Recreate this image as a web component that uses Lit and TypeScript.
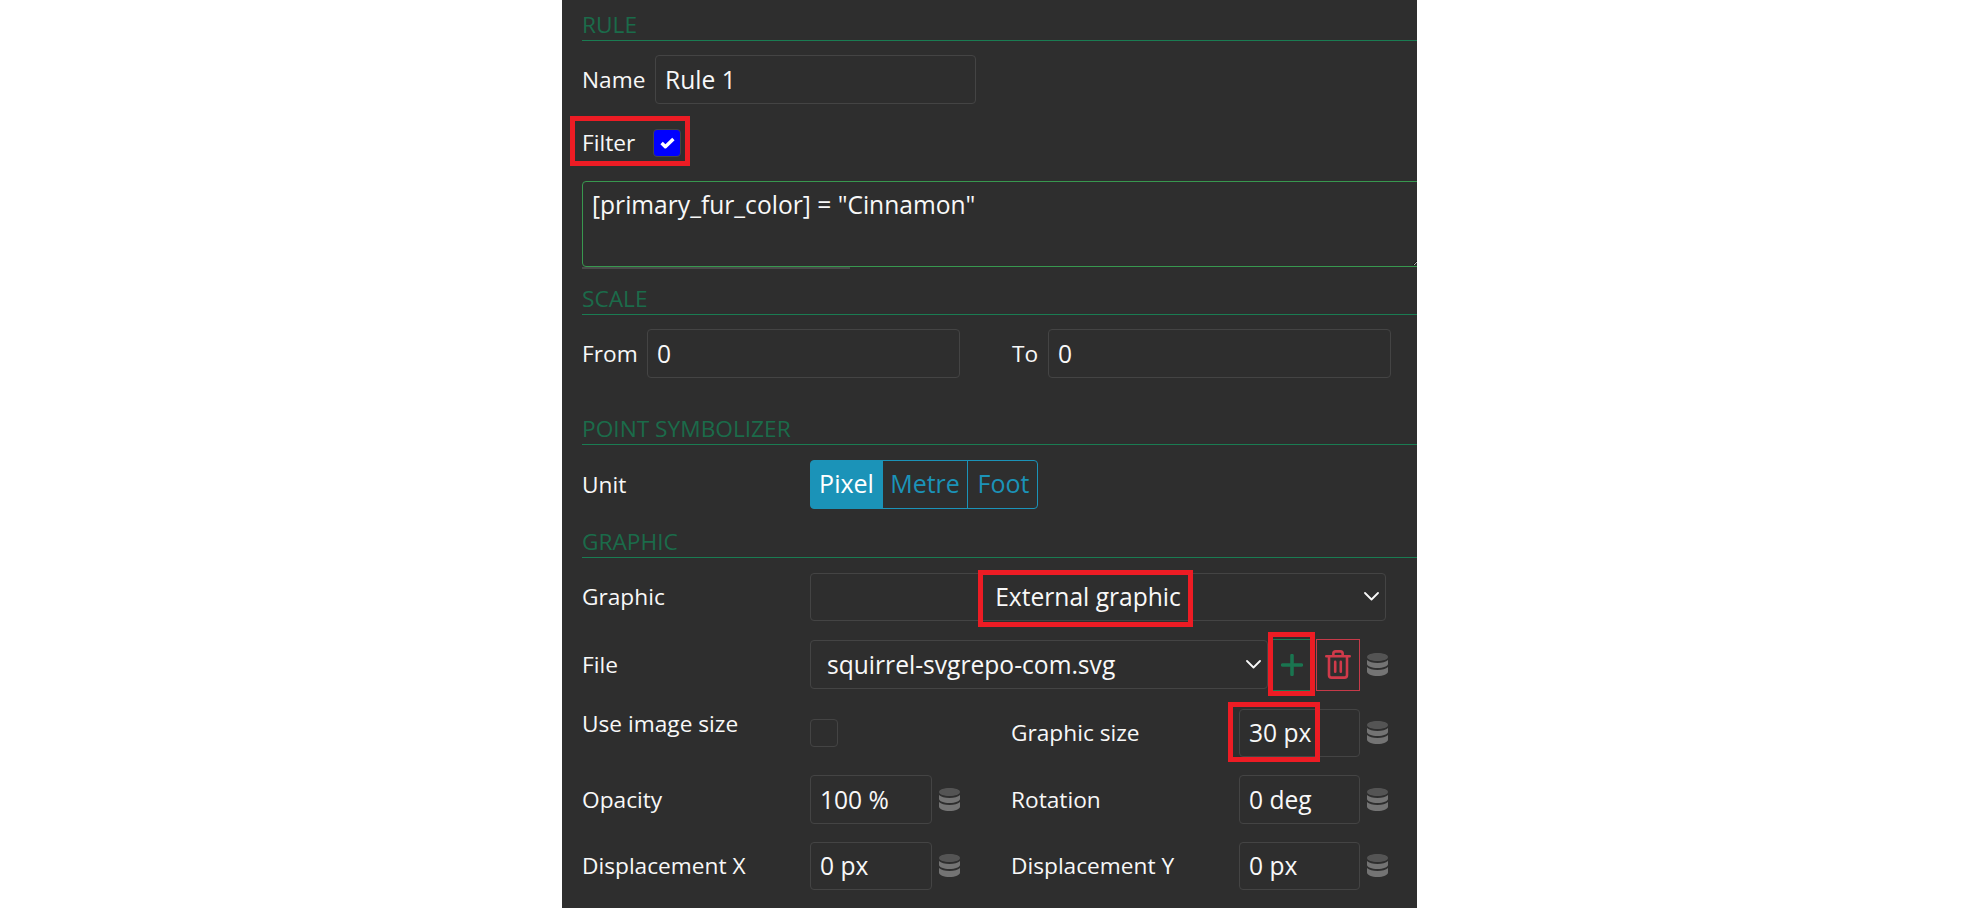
import { LitElement, html, css, svg } from "lit";
import { customElement } from "lit/decorators.js";

const db = html`<svg class="db" viewBox="0 0 21 23" aria-hidden="true">
  <path fill="#545454" d="M0 4C0 1.600 4.700 0 10.500 0S21 1.600 21 4s-4.700 4-10.500 4S0 6.400 0 4Z"/>
  <path fill="#747474" d="M0 7c2 2 6 3 10.500 3S19 9 21 7v4c0 2.300-4.700 4-10.500 4S0 13.300 0 11Z"/>
  <path fill="#747474" d="M0 14c2 2 6 3 10.500 3S19 16 21 14v4.500c0 2.500-4.700 4.500-10.500 4.500S0 21 0 18.500Z"/>
</svg>`;

const chevron = svg`<path d="M1 1l6.500 6.500L14 1" fill="none" stroke="#f8f8f8" stroke-width="1.800" stroke-linecap="round" stroke-linejoin="round"/>`;

@customElement("app-root")
export class AppRoot extends LitElement {
  static styles = css`
    :host {
      display: block;
      height: 908px;
      overflow: hidden;
      background: #fff;
      font-family: "Open Sans", "Noto Sans", sans-serif;
      font-size: 22.700px;
      color: #f8f8f8;
    }
    .panel {
      position: relative;
      width: 855px;
      height: 908px;
      margin-left: 562px;
      padding-left: 20px;
      box-sizing: border-box;
      background: #2e2e2e;
      overflow: hidden;
    }
    .head {
      height: 41px;
      box-sizing: border-box;
      border-bottom: 1.500px solid #1a7c52;
      color: #1b6b4a;
      line-height: 49px;
      white-space: nowrap;
    }
    .row {
      display: flex;
      align-items: center;
      height: 48.500px;
      position: relative;
    }
    .lbl {
      white-space: nowrap;
    }
    input[type="text"] {
      box-sizing: border-box;
      height: 48.500px;
      padding: 0 9px;
      margin: 0;
      background: transparent;
      border: 1px solid #444;
      border-radius: 4px;
      color: inherit;
      font: inherit;
      font-size: 24.600px;
      outline: none;
    }
    .name-row { margin-top: 14px; }
    .name-row .lbl { width: 73px; flex: none; }
    .name-input { width: 321px; }
    .filter-row { margin-top: 14px; height: 50px; position: relative; }
    .filter-row .lbl { width: 71px; }
    .check {
      box-sizing: border-box;
      display: flex;
      width: 28px;
      height: 28px;
      border: 1px solid #444;
      border-radius: 4px;
      align-items: center;
      justify-content: center;
    }
    .check.on { background: #0000ff; }
    .check svg { width: 15px; height: 12px; }
    .mark {
      position: absolute;
      box-sizing: border-box;
      border: 5px solid #ed1c24;
      pointer-events: none;
    }
    .mark-filter { left: -12px; top: -2px; width: 120px; height: 50px; }
    textarea {
      display: block;
      box-sizing: border-box;
      width: 840px;
      height: 86px;
      margin: 13px 0 0;
      padding: 7px 9px;
      background: transparent;
      border: 1.500px solid #38984f;
      border-radius: 4px;
      color: inherit;
      font: inherit;
      font-size: 24.600px;
      line-height: 32px;
      outline: none;
      resize: both;
    }
    .bar {
      width: 268px;
      height: 2px;
      background: #4a4a4a;
    }
    .scale-head { margin-top: 5px; }
    .scale-row { margin-top: 14.500px; }
    .scale-row .from { width: 65px; flex: none; }
    .scale-row .to { flex: none; padding-left: 52px; width: 36px; }
    .from-input { width: 313px; }
    .to-input { width: 343px; }
    .point-head { margin-top: 26px; }
    .unit-row { margin-top: 15px; display: grid; grid-template-columns: 228px auto; }
    .seg { display: flex; width: 228px; height: 49px; box-sizing: border-box; font-size: 25px; }
    .seg span {
      display: flex;
      align-items: center;
      justify-content: center;
      box-sizing: border-box;
      padding-bottom: 2px;
      border: 1px solid #1b93b8;
      color: #1b93b8;
      margin-left: -1px;
    }
    .seg span:first-child { margin-left: 0; width: 73px; background: #1b93b8; color: #fff; border-radius: 4px 0 0 4px; }
    .seg span:nth-child(2) { width: 86px; }
    .seg span:last-child { width: 71px; padding-left: 2px; border-radius: 0 4px 4px 0; }
    .graphic-head { margin-top: 8px; }
    .select {
      box-sizing: border-box;
      height: 48.500px;
      border: 1px solid #444;
      border-radius: 4px;
      display: flex;
      align-items: center;
      position: relative;
      font-size: 24.600px;
    }
    .select svg { position: absolute; width: 15px; height: 9px; top: 50%; margin-top: -5px; right: 6px; }
    .sel-row { margin-top: 15px; display: grid; grid-template-columns: 228px 576px; }
    .sel-graphic { justify-content: center; padding-right: 20px; }
    .mark-ext { left: 167px; top: -4px; width: 215px; height: 57px; }
    .file-row { margin-top: 17.500px; display: grid; grid-template-columns: 228px 458px 44px 48px auto; align-items: center; }
    .sel-file { padding-left: 16px; }
    .sel-file svg { right: 6px; }
    .add-cell { position: relative; }
    .btn {
      box-sizing: border-box;
      height: 52px;
      display: flex;
      align-items: center;
      justify-content: center;
    }
    .btn.add { width: 44px; border: 1px solid #1a7c52; color: #1a7550; }
    .btn.add svg { width: 22px; height: 22px; margin-left: 4px; }
    .btn.del { width: 44px; margin-left: 4px; border: 1px solid #c63a49; }
    .btn.del svg { width: 26px; height: 29px; }
    .mark-add { left: 0; top: -7px; width: 47px; height: 64px; }
    .db { width: 21px; height: 23px; display: block; margin-left: 7px; }
    .grid {
      margin-top: 18px;
      display: grid;
      grid-template-columns: 228px 122px 79px 228px 121px auto;
      grid-auto-rows: 48.500px;
      row-gap: 18px;
      align-items: center;
    }
    .cell { position: relative; }
    .grid input { width: 100%; display: block; }
    .use-lbl { align-self: start; line-height: 30px; }
    .mark-size { left: -11px; top: -7px; width: 92px; height: 60px; }
    .unit-lbl { align-self: center; }
  `;

  private field(label: string, value: string, mark = false) {
    return html`
      <span class="lbl">${label}</span>
      <div class="cell">
        <input type="text" value=${value} />
        ${mark ? html`<span class="mark mark-size"></span>` : null}
      </div>
      ${db}
    `;
  }

  render() {
    return html`
      <div class="panel">
        <div class="head">RULE</div>
        <div class="row name-row">
          <span class="lbl">Name</span>
          <input class="name-input" type="text" value="Rule 1" />
        </div>
        <div class="row filter-row">
          <span class="lbl">Filter</span>
          <span class="check on">
            <svg viewBox="0 0 14 11"><path d="M1.500 5.500 5 9 12.500 1.800" fill="none" stroke="#fff" stroke-width="3.200" stroke-linejoin="round"/></svg>
          </span>
          <span class="mark mark-filter"></span>
        </div>
        <textarea spellcheck="false">[primary_fur_color] = "Cinnamon"</textarea>
        <div class="bar"></div>

        <div class="head scale-head">SCALE</div>
        <div class="row scale-row">
          <span class="lbl from">From</span>
          <input class="from-input" type="text" value="0" />
          <span class="lbl to">To</span>
          <input class="to-input" type="text" value="0" />
        </div>

        <div class="head point-head">POINT SYMBOLIZER</div>
        <div class="unit-row">
          <span class="lbl unit-lbl">Unit</span>
          <div class="seg"><span>Pixel</span><span>Metre</span><span>Foot</span></div>
        </div>

        <div class="head graphic-head">GRAPHIC</div>
        <div class="sel-row">
          <span class="lbl unit-lbl">Graphic</span>
          <div class="select sel-graphic">
            External graphic
            <svg viewBox="0 0 15 9">${chevron}</svg>
            <span class="mark mark-ext"></span>
          </div>
        </div>
        <div class="file-row">
          <span class="lbl">File</span>
          <div class="select sel-file">
            squirrel-svgrepo-com.svg
            <svg viewBox="0 0 15 9">${chevron}</svg>
          </div>
          <div class="add-cell">
            <div class="btn add">
              <svg viewBox="0 0 21 21"><path d="M10.500 1.500v18M1.500 10.500h18" fill="none" stroke="currentColor" stroke-width="3.400" stroke-linecap="round"/></svg>
            </div>
            <span class="mark mark-add"></span>
          </div>
          <div class="btn del">
            <svg viewBox="0 0 25 28" fill="none" stroke="#d03a4a" stroke-width="2.500" stroke-linecap="round" stroke-linejoin="round">
              <path d="M1.200 6h22.600M8 6V3.500C8 2.200 9 1.300 10.300 1.300h4.400C16 1.300 17 2.200 17 3.500V6M3.800 6v18.200c0 1.400 1 2.500 2.400 2.500h12.600c1.400 0 2.400-1.100 2.400-2.500V6M9.800 11.500v9.500M15.200 11.500v9.500"/>
            </svg>
          </div>
          ${db}
        </div>
        <div class="grid">
          <span class="lbl use-lbl">Use image size</span>
          <div class="cell"><span class="check"></span></div>
          <span></span>
          ${this.field("Graphic size", "30 px", true)}
          ${this.field("Opacity", "100 %")}
          ${this.field("Rotation", "0 deg")}
          ${this.field("Displacement X", "0 px")}
          ${this.field("Displacement Y", "0 px")}
        </div>
      </div>
    `;
  }
}
